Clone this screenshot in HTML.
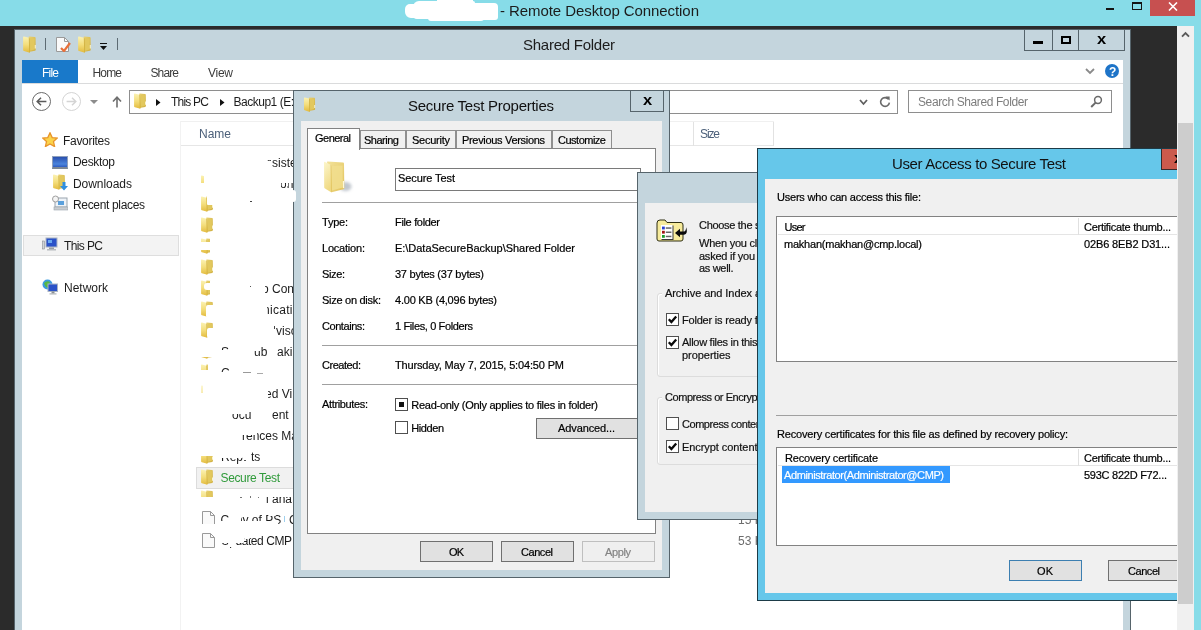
<!DOCTYPE html>
<html lang="en"><head><meta charset="utf-8"><title>Remote Desktop Connection</title>
<style>
html,body{margin:0;padding:0;}
body{width:1201px;height:630px;overflow:hidden;position:relative;background:#87dce8;font-family:"Liberation Sans", sans-serif;}
div,span,svg{position:absolute;box-sizing:border-box;}
span{white-space:pre;}
.d{-webkit-text-stroke:0.2px;}
.w{overflow:hidden;}
#r{left:0;top:0;width:1201px;height:630px;overflow:hidden;will-change:transform;}
</style></head><body><div id="r">
<svg style="left:0;top:0" width="0" height="0"><defs><linearGradient id="gf" x1="0" y1="0" x2="0" y2="1"><stop offset="0" stop-color="#fbf2b4"/><stop offset="0.5" stop-color="#f4de7c"/><stop offset="1" stop-color="#e3bb3e"/></linearGradient><linearGradient id="gb" x1="0" y1="0" x2="1" y2="1"><stop offset="0" stop-color="#e9d272"/><stop offset="1" stop-color="#cfae3e"/></linearGradient><linearGradient id="gf2" x1="0" y1="0" x2="0.3" y2="1"><stop offset="0" stop-color="#fcf6cc"/><stop offset="1" stop-color="#f0da84"/></linearGradient><linearGradient id="gb2" x1="0" y1="0" x2="1" y2="1"><stop offset="0" stop-color="#f3e29a"/><stop offset="1" stop-color="#e2c35a"/></linearGradient><filter id="bl" x="-50%" y="-50%" width="200%" height="200%"><feGaussianBlur stdDeviation="1.6"/></filter></defs></svg>
<div style="left:0px;top:26px;width:1194px;height:604px;background:#2b2b2b;"></div>
<div style="left:405px;top:4px;width:70px;height:14px;background:#fff;border-radius:5px 3px 3px 6px;"></div>
<div style="left:413px;top:1px;width:62px;height:18px;background:#fff;border-radius:6px 2px 2px 4px;"></div>
<div style="left:437px;top:0px;width:36px;height:21px;background:#fff;border-radius:0 0 3px 3px;"></div>
<div style="left:428px;top:6px;width:56px;height:15px;background:#fff;border-radius:3px;"></div>
<div style="left:470px;top:3px;width:28px;height:17px;background:#fff;border-radius:3px 4px 3px 3px;"></div>
<span style="left:500px;top:3px;font-size:15px;line-height:15px;color:#1c1c1c;letter-spacing:-0.075px;">- Remote Desktop Connection</span>
<div style="left:1106px;top:8px;width:8px;height:2px;background:#141414;"></div>
<div style="left:1132px;top:2px;width:10px;height:8px;border:1px solid #141414;border-top-width:2px;"></div>
<div style="left:1150px;top:0px;width:45px;height:16px;background:#c75050;"></div>
<svg style="left:1168px;top:2px;" width="10" height="9" viewBox="0 0 10 9"><path d="M1 0.5 L9 8.5 M9 0.5 L1 8.5" stroke="#fff" stroke-width="1.6" fill="none"/></svg>
<div style="left:14px;top:29px;width:1117px;height:610px;background:#c4d5dd;border:1px solid #56646b;"></div>
<div style="left:22px;top:60px;width:1101px;height:580px;background:#fff;"></div>
<svg style="left:21.8px;top:35.8px;" width="17" height="17" viewBox="0 0 16 16"><path d="M6.2 0.9 Q6.2 0.4 6.8 0.4 L12 0.9 Q12.8 1 12.8 1.8 L12.9 13 Q12.9 13.8 12.1 13.9 L6.4 15 Z" fill="url(#gb)"/><path d="M7.6 2 L11.8 2.3 L11.9 12.8 L7.7 13.6 Z" fill="#e2c85e"/><path d="M1 1.2 Q1 0.3 1.9 0.5 L6.6 1.7 Q7.3 1.9 7.3 2.6 L7.5 14.8 Q7.5 15.8 6.6 15.6 L1.9 14.2 Q1.1 14 1.1 13.2 Z" fill="url(#gf)"/><path d="M6.4 1.7 Q7.3 1.9 7.3 2.6 L7.5 14.8 Q7.5 15.6 6.8 15.6 Z" fill="#cfae3c"/><path d="M12 8.4 L13 8.4 L13 11.8 L12 11.8 Z" fill="#fbf4cc"/></svg>
<div style="left:45px;top:38px;width:1px;height:12px;background:#5d6b73;"></div>
<svg style="left:56px;top:37px;" width="13" height="15" viewBox="0 0 13 15"><path d="M0.5 0.5 H8.5 L12.5 4.5 V14.5 H0.5 Z" fill="#fafafa" stroke="#9a9a9a" stroke-width="1"/><path d="M8.5 0.5 V4.5 H12.5" fill="none" stroke="#9a9a9a" stroke-width="1"/></svg>
<svg style="left:60px;top:42px;" width="11" height="10" viewBox="0 0 11 10"><path d="M1 6 L4 9 L10 1" fill="none" stroke="#e8703a" stroke-width="2.2"/></svg>
<svg style="left:77px;top:35.8px;" width="17" height="17" viewBox="0 0 16 16"><path d="M6.2 0.9 Q6.2 0.4 6.8 0.4 L12 0.9 Q12.8 1 12.8 1.8 L12.9 13 Q12.9 13.8 12.1 13.9 L6.4 15 Z" fill="url(#gb)"/><path d="M7.6 2 L11.8 2.3 L11.9 12.8 L7.7 13.6 Z" fill="#e2c85e"/><path d="M1 1.2 Q1 0.3 1.9 0.5 L6.6 1.7 Q7.3 1.9 7.3 2.6 L7.5 14.8 Q7.5 15.8 6.6 15.6 L1.9 14.2 Q1.1 14 1.1 13.2 Z" fill="url(#gf)"/><path d="M6.4 1.7 Q7.3 1.9 7.3 2.6 L7.5 14.8 Q7.5 15.6 6.8 15.6 Z" fill="#cfae3c"/><path d="M12 8.4 L13 8.4 L13 11.8 L12 11.8 Z" fill="#fbf4cc"/></svg>
<div style="left:100px;top:43px;width:7px;height:1px;background:#111;"></div>
<svg style="left:100px;top:46px;" width="7" height="4" viewBox="0 0 7 4"><path d="M0 0 H7 L3.5 4 Z" fill="#111"/></svg>
<div style="left:117px;top:38px;width:1px;height:12px;background:#5d6b73;"></div>
<span style="left:523px;top:37px;font-size:15px;line-height:15px;color:#1c1c1c;letter-spacing:-0.255px;">Shared Folder</span>
<div style="left:1024px;top:29px;width:101px;height:22px;background:#c4d5dd;border:1px solid #56646b;"></div>
<div style="left:1052px;top:30px;width:1px;height:20px;background:#56646b;"></div>
<div style="left:1078px;top:30px;width:1px;height:20px;background:#56646b;"></div>
<div style="left:1033px;top:41px;width:10px;height:3px;background:#000;"></div>
<div style="left:1061px;top:36px;width:10px;height:8px;border:2px solid #000;"></div>
<span style="left:1097px;top:31px;font-size:15px;line-height:15px;color:#000;font-weight:700;transform:scaleX(1.1);transform-origin:0 0;">x</span>
<div style="left:22px;top:83px;width:1101px;height:1px;background:#dadbdc;"></div>
<div style="left:22px;top:60px;width:56px;height:23px;background:#1979ca;"></div>
<span style="left:42px;top:67px;font-size:12px;line-height:12px;color:#fff;letter-spacing:-0.781px;">File</span>
<span style="left:92.5px;top:67px;font-size:12px;line-height:12px;color:#3b3b3b;letter-spacing:-0.839px;">Home</span>
<span style="left:150.5px;top:67px;font-size:12px;line-height:12px;color:#3b3b3b;letter-spacing:-0.883px;">Share</span>
<span style="left:208px;top:67px;font-size:12px;line-height:12px;color:#3b3b3b;letter-spacing:-0.266px;">View</span>
<svg style="left:1085px;top:68px;" width="10" height="7" viewBox="0 0 10 7"><path d="M1 1 L5 5 L9 1" fill="none" stroke="#8a8a8a" stroke-width="1.8"/></svg>
<div style="left:1105px;top:64px;width:14px;height:14px;background:#1e74c8;border-radius:7px;"></div>
<span style="left:1109px;top:66px;font-size:12px;line-height:12px;color:#fff;font-weight:700;">?</span>
<div style="left:32px;top:92px;width:19px;height:19px;border:1px solid #6b6b6b;border-radius:10px;"></div>
<svg style="left:36px;top:97px;" width="11" height="9" viewBox="0 0 11 9"><path d="M5 0.8 L1.2 4.5 L5 8.2 M1.2 4.5 H10.4" fill="none" stroke="#5a5a5a" stroke-width="1.5"/></svg>
<div style="left:62px;top:92px;width:19px;height:19px;border:1px solid #d4d4d4;border-radius:10px;"></div>
<svg style="left:66px;top:97px;" width="11" height="9" viewBox="0 0 11 9"><path d="M6 0.8 L9.8 4.5 L6 8.2 M9.8 4.5 H0.6" fill="none" stroke="#d4d4d4" stroke-width="1.5"/></svg>
<svg style="left:90px;top:100px;" width="8" height="4" viewBox="0 0 8 4"><path d="M0 0 H8 L4 4 Z" fill="#8c8c8c"/></svg>
<svg style="left:112px;top:96px;" width="10" height="12" viewBox="0 0 10 12"><path d="M5 11.5 V1.5 M1 5.5 L5 1.2 L9 5.5" fill="none" stroke="#6e6e6e" stroke-width="1.6"/></svg>
<div style="left:129px;top:90px;width:769px;height:24px;background:#fff;border:1px solid #8e8e8e;"></div>
<svg style="left:133px;top:93px;" width="16" height="16" viewBox="0 0 16 16"><path d="M6.2 0.9 Q6.2 0.4 6.8 0.4 L12 0.9 Q12.8 1 12.8 1.8 L12.9 13 Q12.9 13.8 12.1 13.9 L6.4 15 Z" fill="url(#gb)"/><path d="M7.6 2 L11.8 2.3 L11.9 12.8 L7.7 13.6 Z" fill="#e2c85e"/><path d="M1 1.2 Q1 0.3 1.9 0.5 L6.6 1.7 Q7.3 1.9 7.3 2.6 L7.5 14.8 Q7.5 15.8 6.6 15.6 L1.9 14.2 Q1.1 14 1.1 13.2 Z" fill="url(#gf)"/><path d="M6.4 1.7 Q7.3 1.9 7.3 2.6 L7.5 14.8 Q7.5 15.6 6.8 15.6 Z" fill="#cfae3c"/><path d="M12 8.4 L13 8.4 L13 11.8 L12 11.8 Z" fill="#fbf4cc"/></svg>
<svg style="left:156px;top:99px;" width="5" height="7" viewBox="0 0 5 7"><path d="M0 0 L4.5 3.5 L0 7 Z" fill="#111"/></svg>
<span style="left:171px;top:96px;font-size:12px;line-height:12px;color:#1c1c1c;letter-spacing:-0.781px;">This PC</span>
<svg style="left:220px;top:99px;" width="5" height="7" viewBox="0 0 5 7"><path d="M0 0 L4.5 3.5 L0 7 Z" fill="#111"/></svg>
<span style="left:233.5px;top:96px;font-size:12px;line-height:12px;color:#1c1c1c;letter-spacing:-0.487px;">Backup1 (E:)</span>
<svg style="left:859px;top:99px;" width="9" height="7" viewBox="0 0 9 7"><path d="M1 1 L4.5 5 L8 1" fill="none" stroke="#5f5f5f" stroke-width="1.8"/></svg>
<svg style="left:879px;top:96px;" width="12" height="12" viewBox="0 0 12 12"><path d="M9.6 3.4 A4.4 4.4 0 1 0 10.4 6.6" fill="none" stroke="#6a6a6a" stroke-width="1.6"/><path d="M6.6 0.4 H10.6 V4.4 Z" fill="#6a6a6a"/></svg>
<div style="left:908px;top:90px;width:204px;height:23px;background:#fff;border:1px solid #8e8e8e;"></div>
<span style="left:918px;top:96px;font-size:12px;line-height:12px;color:#7d7d7d;letter-spacing:-0.390px;">Search Shared Folder</span>
<svg style="left:1090px;top:95px;" width="13" height="13" viewBox="0 0 13 13"><circle cx="8" cy="5" r="3.4" fill="none" stroke="#6a6a6a" stroke-width="1.5"/><path d="M5.6 7.6 L1.2 12" stroke="#6a6a6a" stroke-width="2" fill="none"/></svg>
<svg style="left:42px;top:132px;" width="16" height="15" viewBox="0 0 16 15"><path d="M8 0.8 L10.2 5.6 L15.3 6.1 L11.5 9.6 L12.6 14.6 L8 12 L3.4 14.6 L4.5 9.6 L0.7 6.1 L5.8 5.6 Z" fill="#fbd34a" stroke="#e8952c" stroke-width="1.3"/></svg>
<span style="left:63px;top:135px;font-size:12px;line-height:12px;color:#1c1c1c;letter-spacing:-0.295px;">Favorites</span>
<div style="left:52px;top:156px;width:16px;height:13px;border:1px solid #8fa0bc;background:linear-gradient(180deg,#2a4fae,#4a84dc 70%,#2f5cc0);border-bottom:2px solid #7d8894;"></div>
<span style="left:73px;top:156px;font-size:12px;line-height:12px;color:#1c1c1c;letter-spacing:-0.339px;">Desktop</span>
<svg style="left:52px;top:174px;" width="16" height="16" viewBox="0 0 16 16"><path d="M6.2 0.9 Q6.2 0.4 6.8 0.4 L12 0.9 Q12.8 1 12.8 1.8 L12.9 13 Q12.9 13.8 12.1 13.9 L6.4 15 Z" fill="url(#gb)"/><path d="M7.6 2 L11.8 2.3 L11.9 12.8 L7.7 13.6 Z" fill="#e2c85e"/><path d="M1 1.2 Q1 0.3 1.9 0.5 L6.6 1.7 Q7.3 1.9 7.3 2.6 L7.5 14.8 Q7.5 15.8 6.6 15.6 L1.9 14.2 Q1.1 14 1.1 13.2 Z" fill="url(#gf)"/><path d="M6.4 1.7 Q7.3 1.9 7.3 2.6 L7.5 14.8 Q7.5 15.6 6.8 15.6 Z" fill="#cfae3c"/><path d="M12 8.4 L13 8.4 L13 11.8 L12 11.8 Z" fill="#fbf4cc"/></svg>
<svg style="left:60px;top:182px;" width="8" height="9" viewBox="0 0 8 9"><path d="M2.5 0 H5.5 V4 H8 L4 8.6 L0 4 H2.5 Z" fill="#2f8fe0"/></svg>
<span style="left:73px;top:178px;font-size:12px;line-height:12px;color:#1c1c1c;letter-spacing:-0.047px;">Downloads</span>
<svg style="left:52px;top:195px;" width="16" height="16" viewBox="0 0 16 16"><rect x="3" y="3" width="12" height="9" fill="#eef3f8" stroke="#9aa4ad"/><rect x="6" y="6" width="6" height="4" fill="#5aa0dc"/><rect x="2" y="12" width="14" height="3" fill="#c9cdd1" stroke="#9aa4ad" stroke-width="0.6"/><circle cx="3.5" cy="4" r="3" fill="#f4f4f4" stroke="#8a8a8a" stroke-width="0.8"/></svg>
<span style="left:73px;top:199px;font-size:12px;line-height:12px;color:#1c1c1c;letter-spacing:-0.337px;">Recent places</span>
<div style="left:23px;top:235px;width:156px;height:21px;background:#f3f3f3;border:1px solid #dedede;"></div>
<svg style="left:42px;top:237px;" width="16" height="16" viewBox="0 0 16 16"><rect x="0.5" y="4" width="2" height="8" fill="#cfd4d8" stroke="#8a8f94" stroke-width="0.6"/><rect x="4" y="1" width="11" height="9" fill="#2a52c8" stroke="#aab4c4"/><rect x="6" y="3" width="4" height="3" fill="#69a8f0"/><rect x="7" y="10.5" width="5" height="1.5" fill="#9aa0a6"/><rect x="5" y="12" width="9" height="1.5" fill="#b8bcc0"/></svg>
<span style="left:64px;top:240px;font-size:12px;line-height:12px;color:#1c1c1c;letter-spacing:-0.615px;">This PC</span>
<svg style="left:42px;top:279px;" width="16" height="16" viewBox="0 0 16 16"><circle cx="5.5" cy="5.5" r="5" fill="#3a9be0"/><path d="M2 4 Q5 1 8 3 Q6 6 7 9 Q3 9 2 4Z" fill="#57b846"/><rect x="6" y="5" width="9.5" height="7.5" fill="#2a52c8" stroke="#aab4c4"/><rect x="9.5" y="12.5" width="3" height="2" fill="#8a8f94"/><rect x="7.5" y="14.3" width="7" height="1.2" fill="#b0b4b8"/></svg>
<span style="left:64px;top:282px;font-size:12px;line-height:12px;color:#1c1c1c;">Network</span>
<div style="left:180px;top:121px;width:1px;height:520px;background:#f2f2f2;"></div>
<div style="left:181px;top:121px;width:593px;height:25px;background:#fff;border-bottom:1px solid #e6e6e6;border-top:1px solid #f0f0f0;"></div>
<div style="left:693px;top:122px;width:1px;height:24px;background:#e2e2e2;"></div>
<div style="left:773px;top:122px;width:1px;height:24px;background:#e2e2e2;"></div>
<span style="left:199px;top:128px;font-size:12px;line-height:12px;color:#4c607a;">Name</span>
<span style="left:700px;top:128px;font-size:12px;line-height:12px;color:#4c607a;letter-spacing:-1.115px;">Size</span>
<span style="left:267px;top:157px;font-size:12px;line-height:12px;color:#1c1c1c;">r</span>
<span style="left:272px;top:157px;font-size:12px;line-height:12px;color:#1c1c1c;">sister</span>
<div style="left:264px;top:161px;width:7px;height:8px;background:#fff;border-radius:1px;"></div>
<svg style="left:200px;top:175px;" width="16" height="16" viewBox="0 0 16 16"><path d="M6.2 0.9 Q6.2 0.4 6.8 0.4 L12 0.9 Q12.8 1 12.8 1.8 L12.9 13 Q12.9 13.8 12.1 13.9 L6.4 15 Z" fill="url(#gb)"/><path d="M7.6 2 L11.8 2.3 L11.9 12.8 L7.7 13.6 Z" fill="#e2c85e"/><path d="M1 1.2 Q1 0.3 1.9 0.5 L6.6 1.7 Q7.3 1.9 7.3 2.6 L7.5 14.8 Q7.5 15.8 6.6 15.6 L1.9 14.2 Q1.1 14 1.1 13.2 Z" fill="url(#gf)"/><path d="M6.4 1.7 Q7.3 1.9 7.3 2.6 L7.5 14.8 Q7.5 15.6 6.8 15.6 Z" fill="#cfae3c"/><path d="M12 8.4 L13 8.4 L13 11.8 L12 11.8 Z" fill="#fbf4cc"/></svg>
<span style="left:280px;top:178px;font-size:12px;line-height:12px;color:#1c1c1c;">onn</span>
<div style="left:276px;top:176px;width:20px;height:7px;background:#fff;border-radius:1px;"></div>
<div style="left:276px;top:182px;width:5px;height:7px;background:#fff;border-radius:1px;"></div>
<div style="left:286px;top:183px;width:2px;height:3px;background:#fff;border-radius:0px;"></div>
<div style="left:199px;top:172px;width:16px;height:3px;background:#fff;border-radius:1px;"></div>
<div style="left:204px;top:174px;width:12px;height:12px;background:#fff;border-radius:1px;"></div>
<div style="left:199px;top:183px;width:16px;height:10px;background:#fff;border-radius:1px;"></div>
<svg style="left:200px;top:196px;" width="16" height="16" viewBox="0 0 16 16"><path d="M6.2 0.9 Q6.2 0.4 6.8 0.4 L12 0.9 Q12.8 1 12.8 1.8 L12.9 13 Q12.9 13.8 12.1 13.9 L6.4 15 Z" fill="url(#gb)"/><path d="M7.6 2 L11.8 2.3 L11.9 12.8 L7.7 13.6 Z" fill="#e2c85e"/><path d="M1 1.2 Q1 0.3 1.9 0.5 L6.6 1.7 Q7.3 1.9 7.3 2.6 L7.5 14.8 Q7.5 15.8 6.6 15.6 L1.9 14.2 Q1.1 14 1.1 13.2 Z" fill="url(#gf)"/><path d="M6.4 1.7 Q7.3 1.9 7.3 2.6 L7.5 14.8 Q7.5 15.6 6.8 15.6 Z" fill="#cfae3c"/><path d="M12 8.4 L13 8.4 L13 11.8 L12 11.8 Z" fill="#fbf4cc"/></svg>
<div style="left:207px;top:194px;width:8px;height:11px;background:#fff;border-radius:1px;"></div>
<div style="left:250px;top:201px;width:2px;height:1px;background:#444;"></div>
<svg style="left:200px;top:217px;" width="16" height="16" viewBox="0 0 16 16"><path d="M6.2 0.9 Q6.2 0.4 6.8 0.4 L12 0.9 Q12.8 1 12.8 1.8 L12.9 13 Q12.9 13.8 12.1 13.9 L6.4 15 Z" fill="url(#gb)"/><path d="M7.6 2 L11.8 2.3 L11.9 12.8 L7.7 13.6 Z" fill="#e2c85e"/><path d="M1 1.2 Q1 0.3 1.9 0.5 L6.6 1.7 Q7.3 1.9 7.3 2.6 L7.5 14.8 Q7.5 15.8 6.6 15.6 L1.9 14.2 Q1.1 14 1.1 13.2 Z" fill="url(#gf)"/><path d="M6.4 1.7 Q7.3 1.9 7.3 2.6 L7.5 14.8 Q7.5 15.6 6.8 15.6 Z" fill="#cfae3c"/><path d="M12 8.4 L13 8.4 L13 11.8 L12 11.8 Z" fill="#fbf4cc"/></svg>
<svg style="left:200px;top:238px;" width="16" height="16" viewBox="0 0 16 16"><path d="M6.2 0.9 Q6.2 0.4 6.8 0.4 L12 0.9 Q12.8 1 12.8 1.8 L12.9 13 Q12.9 13.8 12.1 13.9 L6.4 15 Z" fill="url(#gb)"/><path d="M7.6 2 L11.8 2.3 L11.9 12.8 L7.7 13.6 Z" fill="#e2c85e"/><path d="M1 1.2 Q1 0.3 1.9 0.5 L6.6 1.7 Q7.3 1.9 7.3 2.6 L7.5 14.8 Q7.5 15.8 6.6 15.6 L1.9 14.2 Q1.1 14 1.1 13.2 Z" fill="url(#gf)"/><path d="M6.4 1.7 Q7.3 1.9 7.3 2.6 L7.5 14.8 Q7.5 15.6 6.8 15.6 Z" fill="#cfae3c"/><path d="M12 8.4 L13 8.4 L13 11.8 L12 11.8 Z" fill="#fbf4cc"/></svg>
<div style="left:199px;top:242px;width:16px;height:8px;background:#fff;border-radius:1px;"></div>
<div style="left:199px;top:236px;width:16px;height:2px;background:#fff;border-radius:0px;"></div>
<div style="left:210px;top:236px;width:6px;height:20px;background:#fff;border-radius:1px;"></div>
<svg style="left:200px;top:259px;" width="16" height="16" viewBox="0 0 16 16"><path d="M6.2 0.9 Q6.2 0.4 6.8 0.4 L12 0.9 Q12.8 1 12.8 1.8 L12.9 13 Q12.9 13.8 12.1 13.9 L6.4 15 Z" fill="url(#gb)"/><path d="M7.6 2 L11.8 2.3 L11.9 12.8 L7.7 13.6 Z" fill="#e2c85e"/><path d="M1 1.2 Q1 0.3 1.9 0.5 L6.6 1.7 Q7.3 1.9 7.3 2.6 L7.5 14.8 Q7.5 15.8 6.6 15.6 L1.9 14.2 Q1.1 14 1.1 13.2 Z" fill="url(#gf)"/><path d="M6.4 1.7 Q7.3 1.9 7.3 2.6 L7.5 14.8 Q7.5 15.6 6.8 15.6 Z" fill="#cfae3c"/><path d="M12 8.4 L13 8.4 L13 11.8 L12 11.8 Z" fill="#fbf4cc"/></svg>
<svg style="left:200px;top:280px;" width="16" height="16" viewBox="0 0 16 16"><path d="M6.2 0.9 Q6.2 0.4 6.8 0.4 L12 0.9 Q12.8 1 12.8 1.8 L12.9 13 Q12.9 13.8 12.1 13.9 L6.4 15 Z" fill="url(#gb)"/><path d="M7.6 2 L11.8 2.3 L11.9 12.8 L7.7 13.6 Z" fill="#e2c85e"/><path d="M1 1.2 Q1 0.3 1.9 0.5 L6.6 1.7 Q7.3 1.9 7.3 2.6 L7.5 14.8 Q7.5 15.8 6.6 15.6 L1.9 14.2 Q1.1 14 1.1 13.2 Z" fill="url(#gf)"/><path d="M6.4 1.7 Q7.3 1.9 7.3 2.6 L7.5 14.8 Q7.5 15.6 6.8 15.6 Z" fill="#cfae3c"/><path d="M12 8.4 L13 8.4 L13 11.8 L12 11.8 Z" fill="#fbf4cc"/></svg>
<div style="left:204px;top:283px;width:12px;height:7px;background:#fff;border-radius:3px;"></div>
<div style="left:210px;top:280px;width:6px;height:16px;background:#fff;border-radius:1px;"></div>
<span style="left:262px;top:283px;font-size:12px;line-height:12px;color:#1c1c1c;">o Con</span>
<div style="left:258px;top:282px;width:7px;height:12px;background:#fff;border-radius:1px;"></div>
<div style="left:250px;top:286px;width:1px;height:1px;background:#555;"></div>
<svg style="left:200px;top:301px;" width="16" height="16" viewBox="0 0 16 16"><path d="M6.2 0.9 Q6.2 0.4 6.8 0.4 L12 0.9 Q12.8 1 12.8 1.8 L12.9 13 Q12.9 13.8 12.1 13.9 L6.4 15 Z" fill="url(#gb)"/><path d="M7.6 2 L11.8 2.3 L11.9 12.8 L7.7 13.6 Z" fill="#e2c85e"/><path d="M1 1.2 Q1 0.3 1.9 0.5 L6.6 1.7 Q7.3 1.9 7.3 2.6 L7.5 14.8 Q7.5 15.8 6.6 15.6 L1.9 14.2 Q1.1 14 1.1 13.2 Z" fill="url(#gf)"/><path d="M6.4 1.7 Q7.3 1.9 7.3 2.6 L7.5 14.8 Q7.5 15.6 6.8 15.6 Z" fill="#cfae3c"/><path d="M12 8.4 L13 8.4 L13 11.8 L12 11.8 Z" fill="#fbf4cc"/></svg>
<div style="left:206px;top:305px;width:10px;height:13px;background:#fff;border-radius:2px;"></div>
<span style="left:263px;top:304px;font-size:12px;line-height:12px;color:#1c1c1c;letter-spacing:0.297px;">nicati</span>
<div style="left:258px;top:303px;width:9px;height:13px;background:#fff;border-radius:1px;"></div>
<svg style="left:200px;top:322px;" width="16" height="16" viewBox="0 0 16 16"><path d="M6.2 0.9 Q6.2 0.4 6.8 0.4 L12 0.9 Q12.8 1 12.8 1.8 L12.9 13 Q12.9 13.8 12.1 13.9 L6.4 15 Z" fill="url(#gb)"/><path d="M7.6 2 L11.8 2.3 L11.9 12.8 L7.7 13.6 Z" fill="#e2c85e"/><path d="M1 1.2 Q1 0.3 1.9 0.5 L6.6 1.7 Q7.3 1.9 7.3 2.6 L7.5 14.8 Q7.5 15.8 6.6 15.6 L1.9 14.2 Q1.1 14 1.1 13.2 Z" fill="url(#gf)"/><path d="M6.4 1.7 Q7.3 1.9 7.3 2.6 L7.5 14.8 Q7.5 15.6 6.8 15.6 Z" fill="#cfae3c"/><path d="M12 8.4 L13 8.4 L13 11.8 L12 11.8 Z" fill="#fbf4cc"/></svg>
<div style="left:207px;top:328px;width:9px;height:10px;background:#fff;border-radius:2px;"></div>
<span style="left:276px;top:325px;font-size:12px;line-height:12px;color:#1c1c1c;">visc</span>
<div style="left:274px;top:326px;width:1px;height:3px;background:#444;"></div>
<svg style="left:200px;top:343px;" width="16" height="16" viewBox="0 0 16 16"><path d="M6.2 0.9 Q6.2 0.4 6.8 0.4 L12 0.9 Q12.8 1 12.8 1.8 L12.9 13 Q12.9 13.8 12.1 13.9 L6.4 15 Z" fill="url(#gb)"/><path d="M7.6 2 L11.8 2.3 L11.9 12.8 L7.7 13.6 Z" fill="#e2c85e"/><path d="M1 1.2 Q1 0.3 1.9 0.5 L6.6 1.7 Q7.3 1.9 7.3 2.6 L7.5 14.8 Q7.5 15.8 6.6 15.6 L1.9 14.2 Q1.1 14 1.1 13.2 Z" fill="url(#gf)"/><path d="M6.4 1.7 Q7.3 1.9 7.3 2.6 L7.5 14.8 Q7.5 15.6 6.8 15.6 Z" fill="#cfae3c"/><path d="M12 8.4 L13 8.4 L13 11.8 L12 11.8 Z" fill="#fbf4cc"/></svg>
<div style="left:199px;top:342px;width:17px;height:15px;background:#fff;border-radius:1px;"></div>
<span style="left:221px;top:346px;font-size:12px;line-height:12px;color:#1c1c1c;">S</span>
<div style="left:219px;top:350px;width:12px;height:8px;background:#fff;border-radius:1px;"></div>
<span style="left:254px;top:346px;font-size:12px;line-height:12px;color:#1c1c1c;">ub</span>
<div style="left:252px;top:345px;width:9px;height:6px;background:#fff;border-radius:1px;"></div>
<span style="left:277px;top:346px;font-size:12px;line-height:12px;color:#1c1c1c;">aki</span>
<svg style="left:200px;top:364px;" width="16" height="16" viewBox="0 0 16 16"><path d="M6.2 0.9 Q6.2 0.4 6.8 0.4 L12 0.9 Q12.8 1 12.8 1.8 L12.9 13 Q12.9 13.8 12.1 13.9 L6.4 15 Z" fill="url(#gb)"/><path d="M7.6 2 L11.8 2.3 L11.9 12.8 L7.7 13.6 Z" fill="#e2c85e"/><path d="M1 1.2 Q1 0.3 1.9 0.5 L6.6 1.7 Q7.3 1.9 7.3 2.6 L7.5 14.8 Q7.5 15.8 6.6 15.6 L1.9 14.2 Q1.1 14 1.1 13.2 Z" fill="url(#gf)"/><path d="M6.4 1.7 Q7.3 1.9 7.3 2.6 L7.5 14.8 Q7.5 15.6 6.8 15.6 Z" fill="#cfae3c"/><path d="M12 8.4 L13 8.4 L13 11.8 L12 11.8 Z" fill="#fbf4cc"/></svg>
<div style="left:208px;top:363px;width:8px;height:16px;background:#fff;border-radius:1px;"></div>
<div style="left:199px;top:370px;width:12px;height:10px;background:#fff;border-radius:1px;"></div>
<span style="left:221px;top:367px;font-size:12px;line-height:12px;color:#1c1c1c;">C</span>
<div style="left:219px;top:372px;width:12px;height:7px;background:#fff;border-radius:1px;"></div>
<div style="left:243px;top:372px;width:8px;height:1px;background:#999;"></div>
<div style="left:257px;top:373px;width:6px;height:1px;background:#aaa;"></div>
<svg style="left:200px;top:385px;opacity:0.6;" width="16" height="16" viewBox="0 0 16 16"><path d="M6.2 0.9 Q6.2 0.4 6.8 0.4 L12 0.9 Q12.8 1 12.8 1.8 L12.9 13 Q12.9 13.8 12.1 13.9 L6.4 15 Z" fill="url(#gb)"/><path d="M7.6 2 L11.8 2.3 L11.9 12.8 L7.7 13.6 Z" fill="#e2c85e"/><path d="M1 1.2 Q1 0.3 1.9 0.5 L6.6 1.7 Q7.3 1.9 7.3 2.6 L7.5 14.8 Q7.5 15.8 6.6 15.6 L1.9 14.2 Q1.1 14 1.1 13.2 Z" fill="url(#gf)"/><path d="M6.4 1.7 Q7.3 1.9 7.3 2.6 L7.5 14.8 Q7.5 15.6 6.8 15.6 Z" fill="#cfae3c"/><path d="M12 8.4 L13 8.4 L13 11.8 L12 11.8 Z" fill="#fbf4cc"/></svg>
<div style="left:199px;top:393px;width:17px;height:8px;background:#fff;border-radius:1px;"></div>
<div style="left:203px;top:384px;width:14px;height:12px;background:#fff;border-radius:1px;"></div>
<span style="left:265px;top:388px;font-size:12px;line-height:12px;color:#1c1c1c;">ed Vi</span>
<div style="left:262px;top:387px;width:6px;height:12px;background:#fff;border-radius:1px;"></div>
<span style="left:232px;top:409px;font-size:12px;line-height:12px;color:#1c1c1c;">ocu</span>
<div style="left:230px;top:408px;width:18px;height:6px;background:#fff;border-radius:1px;"></div>
<span style="left:272px;top:409px;font-size:12px;line-height:12px;color:#1c1c1c;">ent</span>
<span style="left:242px;top:430px;font-size:12px;line-height:12px;color:#1c1c1c;">rences Ma</span>
<div style="left:240px;top:429px;width:17px;height:6px;background:#fff;border-radius:1px;"></div>
<svg style="left:200px;top:448px;" width="16" height="16" viewBox="0 0 16 16"><path d="M6.2 0.9 Q6.2 0.4 6.8 0.4 L12 0.9 Q12.8 1 12.8 1.8 L12.9 13 Q12.9 13.8 12.1 13.9 L6.4 15 Z" fill="url(#gb)"/><path d="M7.6 2 L11.8 2.3 L11.9 12.8 L7.7 13.6 Z" fill="#e2c85e"/><path d="M1 1.2 Q1 0.3 1.9 0.5 L6.6 1.7 Q7.3 1.9 7.3 2.6 L7.5 14.8 Q7.5 15.8 6.6 15.6 L1.9 14.2 Q1.1 14 1.1 13.2 Z" fill="url(#gf)"/><path d="M6.4 1.7 Q7.3 1.9 7.3 2.6 L7.5 14.8 Q7.5 15.6 6.8 15.6 Z" fill="#cfae3c"/><path d="M12 8.4 L13 8.4 L13 11.8 L12 11.8 Z" fill="#fbf4cc"/></svg>
<div style="left:199px;top:447px;width:17px;height:9px;background:#fff;border-radius:1px;"></div>
<span style="left:221px;top:451px;font-size:12px;line-height:12px;color:#1c1c1c;">Rep</span>
<div style="left:219px;top:449px;width:24px;height:9px;background:#fff;border-radius:1px;"></div>
<span style="left:251px;top:451px;font-size:12px;line-height:12px;color:#1c1c1c;">ts</span>
<div style="left:244px;top:460px;width:2px;height:1px;background:#555;"></div>
<div style="left:196px;top:467px;width:100px;height:22px;background:#f1f1f1;border:1px solid #dcdcdc;"></div>
<svg style="left:200px;top:469px;" width="16" height="16" viewBox="0 0 16 16"><path d="M6.2 0.9 Q6.2 0.4 6.8 0.4 L12 0.9 Q12.8 1 12.8 1.8 L12.9 13 Q12.9 13.8 12.1 13.9 L6.4 15 Z" fill="url(#gb)"/><path d="M7.6 2 L11.8 2.3 L11.9 12.8 L7.7 13.6 Z" fill="#e2c85e"/><path d="M1 1.2 Q1 0.3 1.9 0.5 L6.6 1.7 Q7.3 1.9 7.3 2.6 L7.5 14.8 Q7.5 15.8 6.6 15.6 L1.9 14.2 Q1.1 14 1.1 13.2 Z" fill="url(#gf)"/><path d="M6.4 1.7 Q7.3 1.9 7.3 2.6 L7.5 14.8 Q7.5 15.6 6.8 15.6 Z" fill="#cfae3c"/><path d="M12 8.4 L13 8.4 L13 11.8 L12 11.8 Z" fill="#fbf4cc"/></svg>
<span style="left:220.5px;top:472px;font-size:12px;line-height:12px;color:#2f9a3a;letter-spacing:-0.366px;">Secure Test</span>
<svg style="left:200px;top:490px;" width="16" height="16" viewBox="0 0 16 16"><path d="M6.2 0.9 Q6.2 0.4 6.8 0.4 L12 0.9 Q12.8 1 12.8 1.8 L12.9 13 Q12.9 13.8 12.1 13.9 L6.4 15 Z" fill="url(#gb)"/><path d="M7.6 2 L11.8 2.3 L11.9 12.8 L7.7 13.6 Z" fill="#e2c85e"/><path d="M1 1.2 Q1 0.3 1.9 0.5 L6.6 1.7 Q7.3 1.9 7.3 2.6 L7.5 14.8 Q7.5 15.8 6.6 15.6 L1.9 14.2 Q1.1 14 1.1 13.2 Z" fill="url(#gf)"/><path d="M6.4 1.7 Q7.3 1.9 7.3 2.6 L7.5 14.8 Q7.5 15.6 6.8 15.6 Z" fill="#cfae3c"/><path d="M12 8.4 L13 8.4 L13 11.8 L12 11.8 Z" fill="#fbf4cc"/></svg>
<div style="left:199px;top:497px;width:17px;height:12px;background:#fff;border-radius:1px;"></div>
<span style="left:272px;top:493px;font-size:12px;line-height:12px;color:#1c1c1c;">ana</span>
<span style="left:266px;top:493px;font-size:12px;line-height:12px;color:#1c1c1c;">l</span>
<div style="left:264px;top:492px;width:30px;height:5px;background:#fff;border-radius:1px;"></div>
<div style="left:240px;top:497px;width:2px;height:1px;background:#777;"></div>
<div style="left:250px;top:496px;width:1px;height:2px;background:#777;"></div>
<div style="left:258px;top:497px;width:1px;height:1px;background:#777;"></div>
<svg style="left:202px;top:511px;" width="13" height="15" viewBox="0 0 13 15"><path d="M0.5 0.5 H8.5 L12.5 4.5 V14.5 H0.5 Z" fill="#fafafa" stroke="#9a9a9a" stroke-width="1"/><path d="M8.5 0.5 V4.5 H12.5" fill="none" stroke="#9a9a9a" stroke-width="1"/></svg>
<div style="left:200px;top:524px;width:17px;height:4px;background:#fff;border-radius:1px;"></div>
<span style="left:220.5px;top:514px;font-size:12px;line-height:12px;color:#1c1c1c;">Copy of PS</span>
<div style="left:218px;top:521px;width:60px;height:6px;background:#fff;border-radius:1px;"></div>
<div style="left:229px;top:515px;width:12px;height:8px;background:#fff;border-radius:1px;"></div>
<div style="left:268px;top:512px;width:8px;height:4px;background:#fff;border-radius:1px;"></div>
<span style="left:289px;top:514px;font-size:12px;line-height:12px;color:#1c1c1c;">C</span>
<div style="left:284px;top:516px;width:1px;height:6px;background:#9fd0ee;"></div>
<svg style="left:202px;top:533px;" width="13" height="15" viewBox="0 0 13 15"><path d="M0.5 0.5 H8.5 L12.5 4.5 V14.5 H0.5 Z" fill="#fafafa" stroke="#9a9a9a" stroke-width="1"/><path d="M8.5 0.5 V4.5 H12.5" fill="none" stroke="#9a9a9a" stroke-width="1"/></svg>
<span style="left:221px;top:535px;font-size:12px;line-height:12px;color:#1c1c1c;letter-spacing:-0.438px;">Updated CMP</span>
<div style="left:218px;top:532px;width:26px;height:11px;background:#fff;border-radius:1px;"></div>
<div style="left:228px;top:543px;width:8px;height:4px;background:#fff;border-radius:1px;"></div>
<div style="left:244px;top:532px;width:6px;height:7px;background:#fff;border-radius:1px;"></div>
<span style="left:738px;top:514px;font-size:12px;line-height:12px;color:#6d6d6d;">15 KB</span>
<span style="left:738px;top:535px;font-size:12px;line-height:12px;color:#6d6d6d;">53 KB</span>
<div style="left:293px;top:90px;width:377px;height:488px;background:#c4d5dd;border:1px solid #56646b;"></div>
<div style="left:301px;top:121px;width:361px;height:449px;background:#f0f0f0;"></div>
<svg style="left:303px;top:97px;" width="15" height="15" viewBox="0 0 16 16"><path d="M6.2 0.9 Q6.2 0.4 6.8 0.4 L12 0.9 Q12.8 1 12.8 1.8 L12.9 13 Q12.9 13.8 12.1 13.9 L6.4 15 Z" fill="url(#gb)"/><path d="M7.6 2 L11.8 2.3 L11.9 12.8 L7.7 13.6 Z" fill="#e2c85e"/><path d="M1 1.2 Q1 0.3 1.9 0.5 L6.6 1.7 Q7.3 1.9 7.3 2.6 L7.5 14.8 Q7.5 15.8 6.6 15.6 L1.9 14.2 Q1.1 14 1.1 13.2 Z" fill="url(#gf)"/><path d="M6.4 1.7 Q7.3 1.9 7.3 2.6 L7.5 14.8 Q7.5 15.6 6.8 15.6 Z" fill="#cfae3c"/><path d="M12 8.4 L13 8.4 L13 11.8 L12 11.8 Z" fill="#fbf4cc"/></svg>
<span style="left:408px;top:98px;font-size:15px;line-height:15px;color:#111;letter-spacing:-0.260px;">Secure Test Properties</span>
<div style="left:630px;top:90px;width:34px;height:22px;background:#c4d5dd;border:1px solid #56646b;"></div>
<span style="left:643px;top:92px;font-size:15px;line-height:15px;color:#000;font-weight:700;transform:scaleX(1.1);transform-origin:0 0;">x</span>
<div style="left:360px;top:130px;width:46px;height:19px;background:#f0f0f0;border:1px solid #8f8f8f;"></div>
<div style="left:406px;top:130px;width:50px;height:19px;background:#f0f0f0;border:1px solid #8f8f8f;"></div>
<div style="left:456px;top:130px;width:96px;height:19px;background:#f0f0f0;border:1px solid #8f8f8f;"></div>
<div style="left:552px;top:130px;width:60px;height:19px;background:#f0f0f0;border:1px solid #8f8f8f;"></div>
<div style="left:307px;top:148px;width:349px;height:386px;background:#fff;border:1px solid #828282;"></div>
<div style="left:307px;top:128px;width:53px;height:22px;background:#fff;border:1px solid #828282;border-bottom:none;"></div>
<span class="d" style="left:315px;top:133px;font-size:11px;line-height:11px;color:#000;letter-spacing:-0.523px;">General</span>
<span class="d" style="left:364px;top:135px;font-size:11px;line-height:11px;color:#000;letter-spacing:-0.487px;">Sharing</span>
<span class="d" style="left:412px;top:135px;font-size:11px;line-height:11px;color:#000;letter-spacing:-0.250px;">Security</span>
<span class="d" style="left:462px;top:135px;font-size:11px;line-height:11px;color:#000;letter-spacing:-0.315px;">Previous Versions</span>
<span class="d" style="left:558px;top:135px;font-size:11px;line-height:11px;color:#000;letter-spacing:-0.496px;">Customize</span>
<svg style="left:322px;top:160px;" width="32" height="34" viewBox="0 0 32 34"><ellipse cx="23.5" cy="26.5" rx="6" ry="4.5" fill="#8e99a6" opacity="0.55" filter="url(#bl)"/><path d="M5 2 Q5 1.3 5.8 1.4 L21 2.6 Q22 2.7 22 3.7 L22.3 28 Q22.3 29 21.4 29.2 L9.6 32.3 Z" fill="url(#gb2)"/><path d="M10 6 L20.6 5.4 L20.8 27.6 L10 30.4 Z" fill="#f1de8e" opacity="0.85"/><path d="M2 2.6 Q2 1.4 3 1.9 L8.6 4.8 Q9.4 5.2 9.4 6.2 L9.8 31.2 Q9.8 32.6 8.7 32 L3 28.6 Q2.2 28.1 2.2 27.2 Z" fill="url(#gf2)"/><path d="M8.6 4.8 Q9.4 5.2 9.4 6.2 L9.8 31.2 Q9.8 32.4 9 32.2 Z" fill="#e0c25c"/><path d="M20.8 21 L22 21 L22.2 28 L20.9 28.3 Z" fill="#fdf8d8"/></svg>
<div style="left:395px;top:168px;width:246px;height:23px;background:#fff;border:1px solid #7a7a7a;"></div>
<span class="d" style="left:398px;top:173px;font-size:11px;line-height:11px;color:#000;letter-spacing:-0.089px;">Secure Test</span>
<div style="left:322px;top:202px;width:319px;height:1px;background:#a0a0a0;"></div>
<div style="left:322px;top:345px;width:319px;height:1px;background:#a0a0a0;"></div>
<div style="left:322px;top:384px;width:319px;height:1px;background:#a0a0a0;"></div>
<span class="d" style="left:322px;top:217px;font-size:11px;line-height:11px;color:#000;letter-spacing:-0.227px;">Type:</span>
<span class="d" style="left:395px;top:217px;font-size:11px;line-height:11px;color:#000;letter-spacing:-0.330px;">File folder</span>
<span class="d" style="left:322px;top:243px;font-size:11px;line-height:11px;color:#000;letter-spacing:-0.207px;">Location:</span>
<span class="d" style="left:395px;top:243px;font-size:11px;line-height:11px;color:#000;letter-spacing:-0.031px;">E:\DataSecureBackup\Shared Folder</span>
<span class="d" style="left:322px;top:269px;font-size:11px;line-height:11px;color:#000;letter-spacing:-0.367px;">Size:</span>
<span class="d" style="left:395px;top:269px;font-size:11px;line-height:11px;color:#000;letter-spacing:-0.253px;">37 bytes (37 bytes)</span>
<span class="d" style="left:322px;top:295px;font-size:11px;line-height:11px;color:#000;letter-spacing:-0.281px;">Size on disk:</span>
<span class="d" style="left:395px;top:295px;font-size:11px;line-height:11px;color:#000;letter-spacing:-0.220px;">4.00 KB (4,096 bytes)</span>
<span class="d" style="left:322px;top:321px;font-size:11px;line-height:11px;color:#000;letter-spacing:-0.436px;">Contains:</span>
<span class="d" style="left:395px;top:321px;font-size:11px;line-height:11px;color:#000;letter-spacing:-0.375px;">1 Files, 0 Folders</span>
<span class="d" style="left:322px;top:360px;font-size:11px;line-height:11px;color:#000;letter-spacing:-0.458px;">Created:</span>
<span class="d" style="left:395px;top:360px;font-size:11px;line-height:11px;color:#000;letter-spacing:-0.158px;">Thursday, May 7, 2015, 5:04:50 PM</span>
<span class="d" style="left:322px;top:399px;font-size:11px;line-height:11px;color:#000;letter-spacing:-0.353px;">Attributes:</span>
<div style="left:395px;top:398px;width:13px;height:13px;background:#fff;border:1px solid #4f4f4f;"><div style="left:3px;top:3px;width:5px;height:5px;background:#111"></div></div>
<span class="d" style="left:411.3px;top:400px;font-size:11px;line-height:11px;color:#000;letter-spacing:-0.271px;">Read-only (Only applies to files in folder)</span>
<div style="left:395px;top:421px;width:13px;height:13px;background:#fff;border:1px solid #4f4f4f;"></div>
<span class="d" style="left:411.3px;top:423px;font-size:11px;line-height:11px;color:#000;letter-spacing:-0.432px;">Hidden</span>
<div style="left:536px;top:418px;width:105px;height:21px;background:#e1e1e1;border:1px solid #707070;"></div>
<span class="d" style="left:558px;top:423px;font-size:11px;line-height:11px;color:#000;letter-spacing:-0.109px;">Advanced...</span>
<div style="left:420px;top:541px;width:73px;height:21px;background:#e1e1e1;border:1px solid #707070;"></div>
<span class="d" style="left:449px;top:547px;font-size:11px;line-height:11px;color:#000;letter-spacing:-0.906px;">OK</span>
<div style="left:501px;top:541px;width:73px;height:21px;background:#e1e1e1;border:1px solid #707070;"></div>
<span class="d" style="left:521px;top:547px;font-size:11px;line-height:11px;color:#000;letter-spacing:-0.450px;">Cancel</span>
<div style="left:582px;top:541px;width:73px;height:21px;background:#efefef;border:1px solid #bfbfbf;"></div>
<span class="d" style="left:605px;top:547px;font-size:11px;line-height:11px;color:#838383;letter-spacing:-0.383px;">Apply</span>
<div style="left:285px;top:190px;width:11px;height:12px;background:#fff;border-radius:2px 3px 3px 2px;"></div>
<div style="left:637px;top:172px;width:300px;height:348px;background:#c4d5dd;border:1px solid #56646b;"></div>
<div style="left:645px;top:203px;width:284px;height:309px;background:#f0f0f0;"></div>
<svg style="left:656px;top:219px;" width="32" height="23" viewBox="0 0 32 23"><path d="M1 4 Q1 1 4 1 H9 L11 3.5 H25 Q27 3.5 27 6 V20 Q27 22 25 22 H3 Q1 22 1 20 Z" fill="#f7eb9c" stroke="#2e2e12" stroke-width="1"/><path d="M5.5 6.5 H17.5 V21 H5.5 Z" fill="#3a3a3a"/><path d="M5 6 H16.5 V20 H5 Z" fill="#fff"/><rect x="6" y="7.6" width="2.8" height="2.8" fill="#2a3fd0"/><rect x="6" y="11.8" width="2.8" height="2.8" fill="#a01414"/><rect x="6" y="16" width="2.8" height="2.8" fill="#1a9a2a"/><rect x="9.8" y="8.3" width="5.6" height="1.5" fill="#666"/><rect x="9.8" y="12.5" width="5.6" height="1.5" fill="#666"/><rect x="9.8" y="16.7" width="5.6" height="1.5" fill="#666"/><path d="M19 14 L24 9.8 V12.6 H28 Q30 12.2 30.2 8.2 Q32.4 15.4 27.4 15.8 H24 V18.2 Z" fill="#0a0a0a"/></svg>
<span class="d" style="left:699px;top:220px;font-size:11px;line-height:11px;color:#111;letter-spacing:-0.307px;">Choose the settings you want for this folder.</span>
<span class="d" style="left:699px;top:238px;font-size:11px;line-height:11px;color:#111;letter-spacing:-0.233px;">When you click OK or Apply on the Properties dialog, you will be</span>
<span class="d" style="left:699px;top:251px;font-size:11px;line-height:11px;color:#111;letter-spacing:-0.246px;">asked if you want the changes to affect all subfolders and files</span>
<span class="d" style="left:699px;top:263px;font-size:11px;line-height:11px;color:#111;letter-spacing:-0.312px;">as well.</span>
<div style="left:657px;top:293px;width:270px;height:84px;border:1px solid #dcdcdc;border-radius:3px;box-shadow:inset 1px 1px 0 #fff;"></div>
<div style="left:662px;top:287px;width:160px;height:13px;background:#f0f0f0;"></div>
<span class="d" style="left:665px;top:288px;font-size:11px;line-height:11px;color:#111;letter-spacing:-0.066px;">Archive and Index attributes</span>
<div style="left:666px;top:313px;width:13px;height:13px;background:#fff;border:1px solid #4f4f4f;"><svg style="left:0;top:0" width="11" height="11" viewBox="0 0 11 11"><path d="M1.8 5.2 L4.4 8 L9.2 2.4" fill="none" stroke="#0a0a0a" stroke-width="2.3"/></svg></div>
<span class="d" style="left:682px;top:315px;font-size:11px;line-height:11px;color:#111;letter-spacing:-0.198px;">Folder is ready for archiving</span>
<div style="left:666px;top:336px;width:13px;height:13px;background:#fff;border:1px solid #4f4f4f;"><svg style="left:0;top:0" width="11" height="11" viewBox="0 0 11 11"><path d="M1.8 5.2 L4.4 8 L9.2 2.4" fill="none" stroke="#0a0a0a" stroke-width="2.3"/></svg></div>
<span class="d" style="left:682px;top:337px;font-size:11px;line-height:11px;color:#111;letter-spacing:-0.289px;">Allow files in this folder to have contents indexed in addition to file</span>
<span class="d" style="left:682px;top:350px;font-size:11px;line-height:11px;color:#111;letter-spacing:-0.047px;">properties</span>
<div style="left:657px;top:397px;width:270px;height:68px;border:1px solid #dcdcdc;border-radius:3px;box-shadow:inset 1px 1px 0 #fff;"></div>
<div style="left:662px;top:391px;width:160px;height:13px;background:#f0f0f0;"></div>
<span class="d" style="left:665px;top:392px;font-size:11px;line-height:11px;color:#111;letter-spacing:-0.446px;">Compress or Encrypt attributes</span>
<div style="left:666px;top:417px;width:13px;height:13px;background:#fff;border:1px solid #4f4f4f;"></div>
<span class="d" style="left:682px;top:419px;font-size:11px;line-height:11px;color:#111;letter-spacing:-0.457px;">Compress contents to save disk space</span>
<div style="left:666px;top:440px;width:13px;height:13px;background:#fff;border:1px solid #4f4f4f;"><svg style="left:0;top:0" width="11" height="11" viewBox="0 0 11 11"><path d="M1.8 5.2 L4.4 8 L9.2 2.4" fill="none" stroke="#0a0a0a" stroke-width="2.3"/></svg></div>
<span class="d" style="left:682px;top:442px;font-size:11px;line-height:11px;color:#111;letter-spacing:-0.067px;">Encrypt contents to secure data</span>
<div style="left:757px;top:148px;width:440px;height:453px;background:#66c7ea;border:1px solid #1d3b47;"></div>
<div style="left:765px;top:179px;width:424px;height:414px;background:#f0f0f0;"></div>
<span style="left:892px;top:156px;font-size:15px;line-height:15px;color:#111;letter-spacing:-0.366px;">User Access to Secure Test</span>
<div style="left:1161px;top:149px;width:40px;height:21px;background:#cb5a4c;border:1px solid #3a2a2a;border-top:none;"></div>
<span style="left:1173.5px;top:150px;font-size:15px;line-height:15px;color:#000;font-weight:700;transform:scaleX(1.1);transform-origin:0 0;">x</span>
<span class="d" style="left:777px;top:192px;font-size:11px;line-height:11px;color:#000;letter-spacing:-0.213px;">Users who can access this file:</span>
<div style="left:776px;top:216px;width:420px;height:146px;background:#fff;border:1px solid #828282;"></div>
<div style="left:778px;top:218px;width:416px;height:17px;background:#fff;border-bottom:1px solid #e5e5e5;"></div>
<div style="left:1078px;top:218px;width:1px;height:17px;background:#e0e0e0;"></div>
<span class="d" style="left:784.5px;top:222px;font-size:11px;line-height:11px;color:#000;letter-spacing:-0.745px;">User</span>
<span class="d" style="left:1084px;top:222px;font-size:11px;line-height:11px;color:#000;letter-spacing:-0.280px;">Certificate thumb...</span>
<span class="d" style="left:784px;top:239px;font-size:11px;line-height:11px;color:#000;letter-spacing:-0.228px;">makhan(makhan@cmp.local)</span>
<span class="d" style="left:1084px;top:239px;font-size:11px;line-height:11px;color:#000;letter-spacing:-0.138px;">02B6 8EB2 D31...</span>
<div style="left:776px;top:415px;width:420px;height:1px;background:#a0a0a0;"></div>
<span class="d" style="left:777px;top:429px;font-size:11px;line-height:11px;color:#000;letter-spacing:-0.188px;">Recovery certificates for this file as defined by recovery policy:</span>
<div style="left:776px;top:447px;width:420px;height:99px;background:#fff;border:1px solid #828282;"></div>
<div style="left:778px;top:449px;width:416px;height:17px;background:#fff;border-bottom:1px solid #e5e5e5;"></div>
<div style="left:1078px;top:449px;width:1px;height:17px;background:#e0e0e0;"></div>
<span class="d" style="left:785px;top:453px;font-size:11px;line-height:11px;color:#000;letter-spacing:-0.189px;">Recovery certificate</span>
<span class="d" style="left:1084px;top:453px;font-size:11px;line-height:11px;color:#000;letter-spacing:-0.280px;">Certificate thumb...</span>
<div style="left:782px;top:466px;width:168px;height:17px;background:#3399ff;"></div>
<span class="d" style="left:784px;top:470px;font-size:11px;line-height:11px;color:#fff;letter-spacing:-0.404px;">Administrator(Administrator@CMP)</span>
<span class="d" style="left:1084px;top:470px;font-size:11px;line-height:11px;color:#000;letter-spacing:-0.256px;">593C 822D F72...</span>
<div style="left:1009px;top:560px;width:73px;height:21px;background:#e1e1e1;border:1px solid #3c7fb1;"></div>
<span class="d" style="left:1037px;top:566px;font-size:11px;line-height:11px;color:#000;letter-spacing:0.094px;">OK</span>
<div style="left:1108px;top:560px;width:73px;height:21px;background:#e1e1e1;border:1px solid #707070;"></div>
<span class="d" style="left:1128px;top:566px;font-size:11px;line-height:11px;color:#000;letter-spacing:-0.450px;">Cancel</span>
<div style="left:1131px;top:601px;width:46px;height:29px;background:#fff;"></div>
<div style="left:1177px;top:0px;width:24px;height:630px;background:#87dce8;"></div>
<div style="left:1150px;top:0px;width:45px;height:16px;background:#c75050;"></div>
<svg style="left:1168px;top:2px;" width="10" height="9" viewBox="0 0 10 9"><path d="M1 0.5 L9 8.5 M9 0.5 L1 8.5" stroke="#fff" stroke-width="1.6" fill="none"/></svg>
<div style="left:1177px;top:26px;width:17px;height:604px;background:#f0f0f0;"></div>
<div style="left:1178px;top:123px;width:15px;height:481px;background:#cdcdcd;"></div>
<svg style="left:1181px;top:31px;" width="9" height="7" viewBox="0 0 9 7"><path d="M1 5.6 L4.5 2 L8 5.6" fill="none" stroke="#5a5a5a" stroke-width="1.9"/></svg>
</div></body></html>
